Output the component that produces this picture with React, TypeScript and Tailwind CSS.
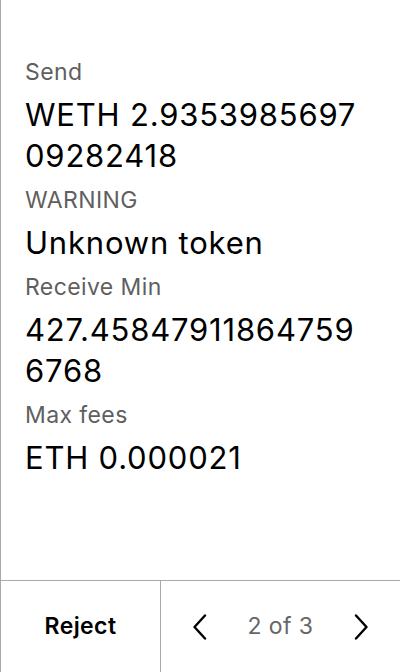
const font = { fontFamily: "Inter, 'Noto Sans', sans-serif" };

type Row = { label: string; value: string };

const rows: Row[] = [
  { label: "Send", value: "WETH 2.935398569709282418" },
  { label: "WARNING", value: "Unknown token" },
  { label: "Receive Min", value: "427.458479118647596768" },
  { label: "Max fees", value: "ETH 0.000021" },
];

function Chevron({ dir }: { dir: "left" | "right" }) {
  return (
    <svg width="16" height="26" viewBox="0 0 16 26" fill="none">
      <path
        d={dir === "left" ? "M13 1.5 L2.5 13 L13 24.5" : "M3 1.5 L13.5 13 L3 24.5"}
        stroke="#000"
        strokeWidth="2.4"
        strokeLinecap="round"
        strokeLinejoin="round"
      />
    </svg>
  );
}

export default function App() {
  return (
    <div
      className="flex h-[672px] w-[400px] flex-col border-l border-[#a9a9a9] bg-white text-black"
      style={font}
    >
      {/* Detalles de la transacción */}
      <div className="flex-1 pl-[24px] pr-[30px] pt-[58px]">
        {rows.map((r, i) => (
          <div key={r.label} className={i > 0 ? "mt-[10px]" : ""}>
            <p className="text-[23px] leading-[28px] tracking-[0.4px] text-[#5f5f5f]">
              {r.label}
            </p>
            <p className="mt-[8px] break-all text-[31px] leading-[41px] tracking-[0.8px] text-black">
              {r.value}
            </p>
          </div>
        ))}
      </div>

      {/* Barra inferior */}
      <div className="flex h-[92px] border-t border-[#a9a9a9]">
        <button
          type="button"
          className="flex w-[160px] items-center justify-center border-r border-[#a9a9a9] text-[23px] font-semibold tracking-[0.4px]"
        >
          Reject
        </button>
        <div className="flex flex-1 items-center justify-between pl-[31px] pr-[31px]">
          <Chevron dir="left" />
          <span className="text-[23px] tracking-[0.4px] text-[#666]">2 of 3</span>
          <Chevron dir="right" />
        </div>
      </div>
    </div>
  );
}
